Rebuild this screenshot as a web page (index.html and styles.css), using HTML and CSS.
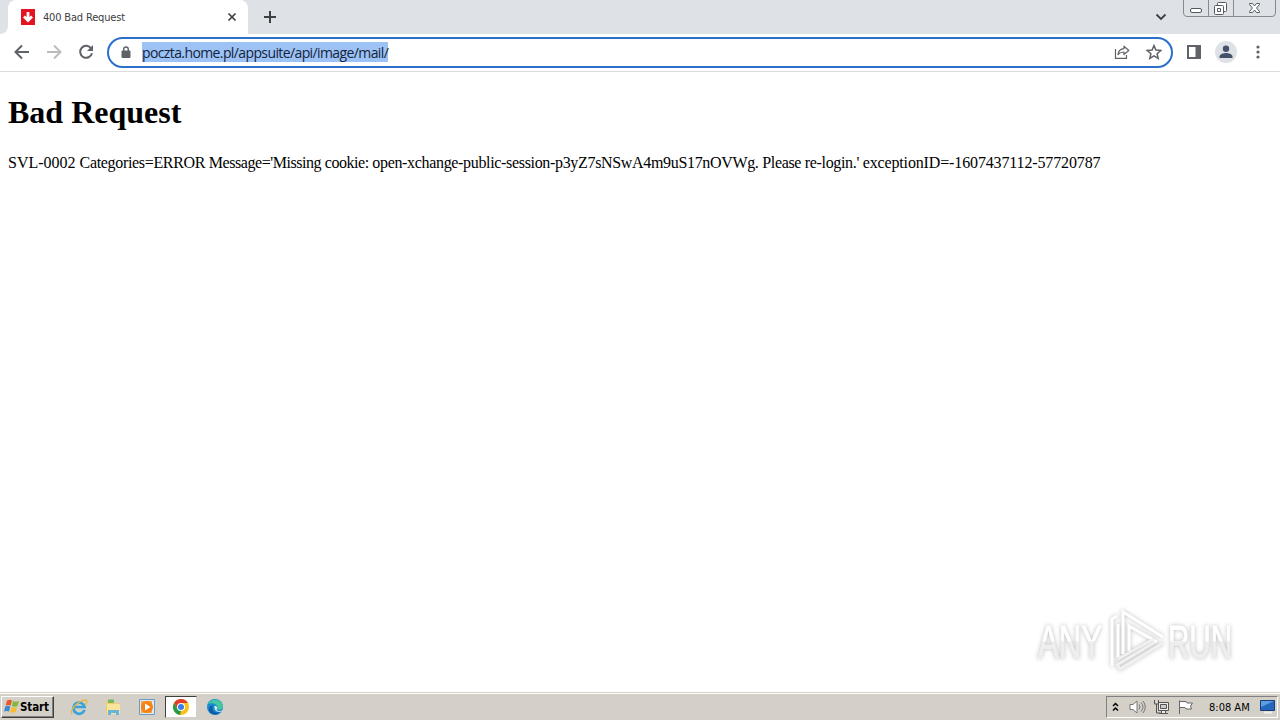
FILE: index.html
```html
<!DOCTYPE html>
<html lang="en">
<head>
<meta charset="UTF-8" />
<title>400 Bad Request</title>
<link rel="stylesheet" href="styles.css">
</head>
<body>
<div class="tabstrip">
  <div class="edge"></div>
  <div class="tab">
    <svg class="favicon" width="14" height="16" viewBox="0 0 14 16"><path fill="#e3131f" d="M0 0h14v16H0z"/><path d="M7 3v9M3 7.500l4 4 4-4" fill="none" stroke="#fff" stroke-width="2.800"/></svg>
    <span class="tab-title">400 Bad Request</span>
    <svg width="10" height="10" viewBox="0 0 10 10"><path d="M1.500 1.500l7 7m0-7l-7 7" stroke="#3c4043" stroke-width="1.700"/></svg>
  </div>
  <svg class="new-tab" width="14" height="14" viewBox="0 0 14 14"><path d="M7 1v12M1 7h12" stroke="#3c4043" stroke-width="2"/></svg>
  <svg class="tab-search" width="12" height="8" viewBox="0 0 12 8"><path d="M1.500 1.500L6 6l4.500-4.500" fill="none" stroke="#3c4043" stroke-width="1.800"/></svg>
  <div class="window-buttons">
    <svg width="93" height="17" viewBox="0 0 93 17" fill="none" stroke="#858a93">
      <path d="M.5 0v13q0 3.500 3.500 3.500h85q3.500 0 3.500-3.500V0M25.500 0v16M50.500 0v16"/>
      <g stroke="#555a62"><rect x="7.500" y="8.500" width="11" height="4" rx="1.500" fill="#fff"/>
      <rect x="34.500" y="2.500" width="9" height="9" rx="1" fill="#fff"/><rect x="31.500" y="5.500" width="9" height="9" rx="1" fill="#fff"/><path d="M34.500 8.500h3v3h-3z"/>
      <path fill="#fff" d="M66.500 3.500h3l2 2.500 2-2.500h3v1l-3 3.500 3 3.500v1h-3l-2-2.500-2 2.500h-3v-1l3-3.500-3-3.500z"/></g>
    </svg>
  </div>
</div>

<div class="toolbar">
  <svg class="back" width="16" height="16" viewBox="0 0 16 16" fill="none" stroke="#5f6368" stroke-width="2"><path d="M15 8H2M8 1.500L1.500 8 8 14.500"/></svg>
  <svg class="forward" width="16" height="16" viewBox="0 0 16 16" fill="none" stroke="#babcbe" stroke-width="2"><path d="M1 8h13M8 1.500L14.500 8 8 14.500"/></svg>
  <svg class="reload" width="16" height="16" viewBox="0 0 16 16"><path d="M13.200 4.500A6 6 0 1 0 14 9.200" fill="none" stroke="#5f6368" stroke-width="2"/><path d="M15 1v6H9z" fill="#5f6368"/></svg>
  <div class="omnibox">
    <svg class="lock" width="10" height="12" viewBox="0 0 10 12"><path d="M2.700 5V3.300a2.300 2.300 0 0 1 4.600 0V5" fill="none" stroke="#5f6368" stroke-width="1.400"/><rect x=".5" y="4.500" width="9" height="7.500" rx="1" fill="#5f6368"/></svg>
    <span class="url">poczta.home.pl/appsuite/api/image/mail/</span>
    <svg class="share" width="16" height="14" viewBox="0 0 16 14" fill="none" stroke="#5f6368" stroke-width="1.200"><path d="M1.500 4v9.400h11V10"/><path d="M4 9.500C4.500 6 6.500 4 10 3.700V1.200L14.800 5.500 10 9.500V7C7.500 7 5.500 7.700 4 9.500z" stroke-linejoin="round"/></svg>
    <svg width="16" height="16" viewBox="0 0 16 16"><path d="M8 1.600l1.900 4.500 4.900.4-3.700 3.200 1.100 4.700L8 11.900l-4.200 2.500 1.100-4.700L1.200 6.500l4.900-.4z" fill="none" stroke="#5f6368" stroke-width="1.500"/></svg>
  </div>
  <svg class="panel" width="14" height="14" viewBox="0 0 14 14"><path d="M1 1h12v12H1z" fill="none" stroke="#5f6368" stroke-width="2"/><path d="M8.500 1H13v12H8.500z" fill="#5f6368"/></svg>
  <svg class="avatar" width="22" height="22" viewBox="0 0 22 22"><circle cx="11" cy="11" r="11" fill="#dee1e6"/><circle cx="11" cy="7.800" r="3.200" fill="#46526b"/><path d="M4.500 17v-1.500C4.500 13 9 12 11 12s6.500 1 6.500 3.500V17z" fill="#46526b"/></svg>
  <svg class="dots" width="4" height="14" viewBox="0 0 4 14" fill="#5f6368"><circle cx="2" cy="2" r="1.600"/><circle cx="2" cy="7" r="1.600"/><circle cx="2" cy="12" r="1.600"/></svg>
</div>

<div class="page">
  <h1>Bad Request</h1>
  <p>SVL-0002 <span class="snug">Categories=ERROR </span><span class="tight">Message='Missing cookie: </span><span class="snug">open-xchange-public-session-p3yZ7sNSwA4m9uS17nOVWg. Please re-login.' </span><span class="code">exceptionID=-1607437112-57720787</span></p>
  <svg class="watermark" width="210" height="74" viewBox="0 0 210 74">
    <defs><linearGradient id="shade" x1="0" y1="0" x2="0" y2="74" gradientUnits="userSpaceOnUse"><stop offset=".5" stop-color="#fff"/><stop offset=".51" stop-color="#eee"/></linearGradient></defs>
    <g class="brand">
      <text x="8" y="54" textLength="64" lengthAdjust="spacingAndGlyphs">ANY</text>
      <text x="138" y="54" textLength="64" lengthAdjust="spacingAndGlyphs">RUN</text>
    </g>
    <g class="logo">
      <path d="M82 62V15l5-3M88 53V20"/>
      <path d="M93 50V8l40 25M99 47V22l28 16"/>
      <path class="low" d="M133 39L90 65l-3-4 38-23M88 55l36-20"/>
    </g>
  </svg>
</div>

<div class="taskbar">
  <div class="start">
    <svg width="16" height="15" viewBox="0 0 16 15"><path d="M3 1.500q3-1.500 5 0L6.700 6.500q-2.500-1-5 0z" fill="#e8582a"/><path d="M9 2q3 1.500 6 0l-1.500 5q-3 1.300-5.500 0z" fill="#82b83a"/><path d="M1.300 7.500q3-1.500 5 0L5 12.500q-2.500-1-5 0z" fill="#3b88d0"/><path d="M7.500 8q3 1.500 5.500 0l-1.300 5q-3 1.300-5.500 0z" fill="#f6be2c"/></svg>
    <span>Start</span>
  </div>
  <div class="launch">
    <svg width="18" height="18" viewBox="0 0 18 18" fill="none"><path d="M14.500 11.800A5.600 5.600 0 1 1 14.600 9H5" stroke="#38a3dd" stroke-width="2.700"/><path d="M2 16C-1 12 9 2 16 2c2 1 0 4-1 5" stroke="#e7b93d" stroke-width="1.300"/></svg>
  </div>
  <div class="launch">
    <svg width="18" height="18" viewBox="0 0 18 18"><path d="M2 3h5l1 2h7v11H2z" fill="#f1ce69"/><path d="M4 1.500h6V5H4z" fill="#79b85d"/><path d="M3 6h13v10H3z" fill="#f9e49b"/><path d="M4 17v-5h11v5h-3v-2H7v2z" fill="#67b5dd"/></svg>
  </div>
  <div class="launch">
    <svg width="18" height="18" viewBox="0 0 18 18"><path d="M1.500 1.500h15v15h-15z" fill="#d9e9f6" stroke="#6c9cc5"/><path d="M3 3h11v12H3z" fill="#f7a64a"/><circle cx="9" cy="9" r="6" fill="#f58212"/><path d="M7 5.500v7L12.500 9z" fill="#fff"/></svg>
  </div>
  <div class="launch active">
    <svg width="16" height="16" viewBox="0 0 16 16"><circle cx="8" cy="8" r="8" fill="#fbc116"/><path d="M1.100 4A8 8 0 0 1 14.900 4H8L4.500 10z" fill="#e33b2e"/><path d="M1.100 4L4.500 10 8 12l-1 4A8 8 0 0 1 1.100 4z" fill="#269b4b"/><circle cx="8" cy="8" r="4" fill="#fff"/><circle cx="8" cy="8" r="3" fill="#377ee9"/></svg>
  </div>
  <div class="launch">
    <svg width="16" height="16" viewBox="0 0 16 16"><circle cx="8" cy="8" r="8" fill="#168bd2"/><path d="M1 5C4-1 14-1 16 7c0 4-5 4.500-6 3 2-4-4-7-9-5z" fill="#45c8a1"/><path d="M6 7c-2 4 2 8 7 6-3 4-9 3-11-1-1-4 2-6 4-5z" fill="#125ba8"/><path d="M8 7c2 0 3 2 1.500 3.500 1 2 4 1.800 6 .7-2 3-9 2-8-4.200z" fill="#dceaf0"/></svg>
  </div>
  <div class="tray">
    <svg class="chevrons" width="7" height="10" viewBox="0 0 7 10"><path d="M1 4l2.500-2.500L6 4M1 8.500L3.500 6 6 8.500" fill="none" stroke="#000" stroke-width="1.500"/></svg>
    <svg class="volume" width="17" height="16" viewBox="0 0 17 16" fill="none" stroke="#777"><path d="M1 5.500h3L8 2v12l-4-3.500H1z" fill="#fff"/><path d="M10 5.500q2 2.500 0 5M12 3.500q4 4.500 0 9M14 2q4.500 6 0 12"/></svg>
    <svg class="network" width="17" height="16" viewBox="0 0 17 16" fill="#eee" stroke="#555"><path d="M5.500 3.500h10v8h-10zM8.500 11.500h4v3h-4zM6 14.500h9"/><path d="M1.500 1v4h4V1M3.500 5v9h4" fill="none"/><path d="M7.500 5.500h6v4h-6z" fill="#ccc"/></svg>
    <svg class="flag" width="17" height="16" viewBox="0 0 17 16"><path d="M2.500 15V1.500M3 2.500h6l1 1.500h5.500l-2 3 1 3H9l-1-1.500H3" fill="#fff" stroke="#666"/></svg>
    <span class="clock">8:08 AM</span>
    <svg class="desktop" width="16" height="15" viewBox="0 0 16 15"><path d="M.5 1.500h14v10H.5z" fill="#2467bd" stroke="#1a3f78"/><path d="M1 2h13L1 8z" fill="#5d9ee2"/><path d="M4 13.500h8" stroke="#eee" stroke-width="2"/></svg>
  </div>
</div>
</body>
</html>
```
FILE: styles.css
```css
body {
  margin: 0;
  width: 1280px;
  height: 720px;
  overflow: hidden;
  display: flex;
  flex-direction: column;
  background: #fff;
  font-family: "DejaVu Sans Condensed", "DejaVu Sans", sans-serif;
}
svg {
  display: block;
  flex: none;
}
.tabstrip {
  height: 34px;
  display: flex;
  align-items: center;
  background: #dee1e6;
}
.edge {
  width: 8px;
  height: 34px;
  background: #fff;
}
.edge::before {
  content: "";
  display: block;
  height: 34px;
  background: #dee1e6;
  border-bottom-right-radius: 8px;
}
.tab {
  box-sizing: border-box;
  width: 240px;
  height: 34px;
  padding: 0 11px 0 13px;
  display: flex;
  align-items: center;
  background: #fff;
  border-radius: 8px 8px 0 0;
}
.tab-title {
  flex: 1;
  margin-left: 8px;
  font-family: "DejaVu Sans", sans-serif;
  font-stretch: condensed;
  font-size: 11px;
  letter-spacing: -0.17px;
  color: #3c4043;
}
.new-tab {
  margin-left: 15px;
}
.tab-search {
  margin-left: auto;
  margin-right: 16px;
}
.window-buttons {
  align-self: flex-start;
  margin-right: 4px;
}
.toolbar {
  box-sizing: border-box;
  height: 38px;
  padding: 0 20px 1px 14px;
  display: flex;
  align-items: center;
  border-bottom: 1px solid #dadce0;
}
.forward,
.reload {
  margin-left: 16px;
}
.omnibox {
  box-sizing: border-box;
  width: 1066px;
  height: 31px;
  margin-left: 13px;
  padding: 0 9px 0 12px;
  display: flex;
  align-items: center;
  border: 2px solid #2b6fcb;
  border-radius: 16px;
}
.url {
  margin-left: 11px;
  height: 20px;
  line-height: 21px;
  font-family: "Open Sans", "Noto Sans", sans-serif;
  font-size: 14px;
  letter-spacing: -0.61px;
  white-space: nowrap;
  background: #9dc2f5;
  color: #14243c;
}
.share {
  margin-left: auto;
  margin-right: 16px;
}
.panel {
  margin-left: 14px;
}
.avatar {
  margin-left: 14px;
}
.dots {
  margin-left: auto;
}
.page {
  position: relative;
  flex: 1;
  padding: 0 8px;
  font-family: "Liberation Serif", serif;
}
.page h1 {
  margin: 21px 0;
  font-size: 32px;
  line-height: 38px;
}
.page p {
  margin: 0;
  font-size: 16px;
  line-height: 22px;
  white-space: nowrap;
}
.snug {
  letter-spacing: -0.33px;
}
.tight {
  letter-spacing: -0.44px;
}
.code {
  letter-spacing: -0.14px;
}
.watermark {
  position: absolute;
  left: 1030px;
  top: 532px;
  overflow: visible;
  filter: drop-shadow(0 0 2px #bbb);
}
.brand {
  font: 46px "Liberation Sans", sans-serif;
  fill: url(#shade);
  stroke: url(#shade);
  stroke-width: 1;
}
.logo {
  fill: none;
  stroke: #fff;
  stroke-width: 3;
}
.low {
  stroke: #f0f0f0;
}
.taskbar {
  box-sizing: border-box;
  height: 28px;
  padding: 1px 2px 1px 1px;
  display: flex;
  align-items: center;
  background: #d4d0c8;
  border-top: 1px solid #d4d0c8;
  box-shadow: inset 0 1px #fff;
}
.start {
  box-sizing: border-box;
  width: 53px;
  height: 22px;
  padding-left: 2px;
  margin-right: 9px;
  display: flex;
  align-items: center;
  border: 1px solid;
  border-color: #fff #404040 #404040 #fff;
  box-shadow: inset -1px -1px #808080;
  font-family: "DejaVu Sans", sans-serif;
  font-stretch: condensed;
  font-weight: bold;
  font-size: 11.5px;
  letter-spacing: -0.1px;
}
.launch {
  box-sizing: border-box;
  width: 32px;
  height: 22px;
  margin-right: 2px;
  display: flex;
  align-items: center;
  justify-content: center;
}
.active {
  background: #fff;
  border: 1px solid;
  border-color: #404040 #d4d0c8 #d4d0c8 #404040;
}
.tray {
  box-sizing: border-box;
  width: 172px;
  height: 22px;
  margin-left: auto;
  padding-left: 5px;
  display: flex;
  align-items: center;
  border: 1px solid;
  border-color: #808080 #fff #fff #808080;
}
.volume {
  margin-left: 10px;
}
.network {
  margin-left: 7px;
}
.flag {
  margin-left: 7px;
}
.clock {
  margin-left: 15px;
  width: 41px;
  font-family: "DejaVu Sans", sans-serif;
  font-stretch: condensed;
  font-size: 11px;
  line-height: 13px;
  padding-top: 1px;
  letter-spacing: 0;
  white-space: nowrap;
}
.desktop {
  margin-left: 10px;
}
```
